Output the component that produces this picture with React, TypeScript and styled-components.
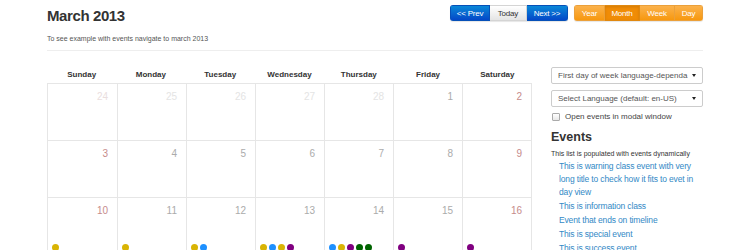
import React from 'react';
import styled, {createGlobalStyle, css} from 'styled-components';

const GlobalStyle = createGlobalStyle`
    body {
        margin: 0;
        background: #fff;
        font-family: "Liberation Sans", Arial, sans-serif;
        color: #333;
    }
`

const Page = styled.div`
    width: 656px;
    padding: 0 47px;
`

const Header = styled.div`
    display: flex;
    justify-content: space-between;
    align-items: flex-start;
`

const Title = styled.h3`
    margin: 0;
    padding-top: 7px;
    font-size: 15px;
    line-height: 18px;
    font-weight: 700;
    letter-spacing: -0.4px;
    color: #333;
`

const Subtitle = styled.div`
    margin-top: 9px;
    font-size: 7px;
    line-height: 10px;
    color: #555;
`

const Toolbar = styled.div`
    display: flex;
    gap: 6px;
    margin-top: 5px;
`

const BtnGroup = styled.div`
    display: flex;
    border-radius: 3px;
    overflow: hidden;
    box-shadow: 0 1px 1px rgba(0, 0, 0, 0.1);
`

type Tone = 'primary' | 'default' | 'warning' | 'warningActive';

const tones = {
    primary: css`
        color: #fff;
        background: linear-gradient(#0a88d8, #0448c8);
        border: 1px solid #0650b8;
    `,
    default: css`
        color: #333;
        background: linear-gradient(#fff, #e4e4e4);
        border: 1px solid #d4d4d4;
    `,
    warning: css`
        color: #fff;
        background: linear-gradient(#fbb24c, #f7980f);
        border: 1px solid #eba03a;
    `,
    warningActive: css`
        color: #fff;
        background: #f08c06;
        border: 1px solid #e0880f;
        box-shadow: inset 0 1px 3px rgba(0, 0, 0, 0.12);
    `,
}

const Btn = styled.div<{ $tone: Tone; $w: number }>`
    width: ${p => p.$w}px;
    height: 16px;
    box-sizing: border-box;
    display: flex;
    align-items: center;
    justify-content: center;
    font-size: 8px;
    letter-spacing: -0.2px;
    & + & {
        border-left-width: 0;
    }
    ${p => tones[p.$tone]}
`

const Divider = styled.div`
    margin-top: 6px;
    border-top: 1px solid #eee;
`

const Body = styled.div`
    display: flex;
    gap: 19px;
    margin-top: 14px;
`

const Calendar = styled.div`
    width: 485px;
`

const WeekHeader = styled.div`
    display: grid;
    grid-template-columns: repeat(7, 1fr);
    height: 18px;
`

const DayName = styled.div`
    padding-top: 2px;
    line-height: 16px;
    text-align: center;
    font-size: 8px;
    font-weight: 700;
    color: #333;
`

const Grid = styled.div`
    display: grid;
    grid-template-columns: repeat(7, 1fr);
    border-left: 1px solid #e6e6e6;
    border-right: 1px solid #e6e6e6;
`

const Cell = styled.div`
    height: 57px;
    box-sizing: border-box;
    border-top: 1px solid #e6e6e6;
    & + & {
        border-left: 1px solid #e6e6e6;
    }
    &:nth-child(7n + 1) {
        border-left: none;
    }
    display: flex;
    flex-direction: column;
`

type DayKind = 'normal' | 'weekend' | 'out' | 'outWeekend';

const dayColors: Record<DayKind, string> = {
    normal: '#ababab',
    weekend: '#c68b8b',
    out: '#e4e4e4',
    outWeekend: '#eadede',
}

const DayNum = styled.div<{ $kind: DayKind }>`
    padding: 7px 9px 0 0;
    text-align: right;
    font-size: 10px;
    line-height: 12px;
    color: ${p => dayColors[p.$kind]};
`

const Events = styled.div`
    display: flex;
    gap: 2px;
    margin-top: 27px;
    padding-left: 4px;
`

const eventColors = {
    warning: '#d9b404',
    info: '#1e90ff',
    special: '#800080',
    success: '#006400',
}

type EventKind = keyof typeof eventColors;

const Dot = styled.span<{ $kind: EventKind }>`
    width: 7px;
    height: 7px;
    border-radius: 50%;
    background: ${p => eventColors[p.$kind]};
`

const Sidebar = styled.div`
    width: 152px;
    padding-top: 2px;
`

const FakeSelect = styled.div`
    height: 17px;
    box-sizing: border-box;
    display: flex;
    align-items: center;
    justify-content: space-between;
    padding: 0 6px 0 6px;
    border: 1px solid #ccc;
    border-radius: 2px;
    font-size: 8px;
    color: #555;
    background: #fff;
    & + & {
        margin-top: 6px;
    }
`

const Caret = styled.span`
    width: 0;
    height: 0;
    border-left: 2px solid transparent;
    border-right: 2px solid transparent;
    border-top: 3px solid #222;
`

const CheckRow = styled.label`
    display: flex;
    align-items: center;
    gap: 5px;
    margin-top: 5px;
    padding-left: 1px;
    font-size: 8px;
    line-height: 10px;
    color: #444;
`

const CheckBox = styled.span`
    width: 6px;
    height: 6px;
    border: 1px solid #aaa;
    border-radius: 1px;
    background: linear-gradient(#fff, #e8e8e8);
`

const EventsTitle = styled.h4`
    margin: 7px 0 0 0;
    font-size: 12.5px;
    line-height: 16px;
    font-weight: 700;
    color: #333;
`

const Note = styled.div`
    margin-top: 4px;
    font-size: 7px;
    line-height: 10px;
    color: #333;
`

const EventList = styled.ul`
    margin: 1px 0 0 0;
    padding: 0 6px 0 8px;
    list-style: none;
`

const EventItem = styled.li`
    font-size: 8.5px;
    letter-spacing: -0.15px;
    line-height: 13px;
    padding-bottom: 1px;
    color: #3289c6;
`

const weekdays = ['Sunday', 'Monday', 'Tuesday', 'Wednesday', 'Thursday', 'Friday', 'Saturday'];

const days: { n: number; kind: DayKind; events?: EventKind[] }[] = [
    {n: 24, kind: 'outWeekend'},
    {n: 25, kind: 'out'},
    {n: 26, kind: 'out'},
    {n: 27, kind: 'out'},
    {n: 28, kind: 'out'},
    {n: 1, kind: 'normal'},
    {n: 2, kind: 'weekend'},
    {n: 3, kind: 'weekend'},
    {n: 4, kind: 'normal'},
    {n: 5, kind: 'normal'},
    {n: 6, kind: 'normal'},
    {n: 7, kind: 'normal'},
    {n: 8, kind: 'normal'},
    {n: 9, kind: 'weekend'},
    {n: 10, kind: 'weekend', events: ['warning']},
    {n: 11, kind: 'normal', events: ['warning']},
    {n: 12, kind: 'normal', events: ['warning', 'info']},
    {n: 13, kind: 'normal', events: ['warning', 'info', 'warning', 'special']},
    {n: 14, kind: 'normal', events: ['info', 'warning', 'special', 'success', 'success']},
    {n: 15, kind: 'normal', events: ['special']},
    {n: 16, kind: 'weekend', events: ['special']},
];

const eventTitles = [
    'This is warning class event with very long title to check how it fits to evet in day view',
    'This is information class',
    'Event that ends on timeline',
    'This is special event',
    'This is success event',
];

function App() {
    return (
        <Page>
            <GlobalStyle/>
            <Header>
                <div>
                    <Title>March 2013</Title>
                    <Subtitle>To see example with events navigate to march 2013</Subtitle>
                </div>
                <Toolbar>
                    <BtnGroup>
                        <Btn $tone="primary" $w={40}>&lt;&lt; Prev</Btn>
                        <Btn $tone="default" $w={37}>Today</Btn>
                        <Btn $tone="primary" $w={41}>Next &gt;&gt;</Btn>
                    </BtnGroup>
                    <BtnGroup>
                        <Btn $tone="warning" $w={31}>Year</Btn>
                        <Btn $tone="warningActive" $w={35}>Month</Btn>
                        <Btn $tone="warning" $w={35}>Week</Btn>
                        <Btn $tone="warning" $w={28}>Day</Btn>
                    </BtnGroup>
                </Toolbar>
            </Header>
            <Divider/>
            <Body>
                <Calendar>
                    <WeekHeader>
                        {weekdays.map(d => <DayName key={d}>{d}</DayName>)}
                    </WeekHeader>
                    <Grid>
                        {days.map(d => (
                            <Cell key={d.n}>
                                <DayNum $kind={d.kind}>{d.n}</DayNum>
                                {d.events && (
                                    <Events>
                                        {d.events.map((e, i) => <Dot key={i} $kind={e}/>)}
                                    </Events>
                                )}
                            </Cell>
                        ))}
                    </Grid>
                </Calendar>
                <Sidebar>
                    <FakeSelect>First day of week language-dependa<Caret/></FakeSelect>
                    <FakeSelect>Select Language (default: en-US)<Caret/></FakeSelect>
                    <CheckRow><CheckBox/>Open events in modal window</CheckRow>
                    <EventsTitle>Events</EventsTitle>
                    <Note>This list is populated with events dynamically</Note>
                    <EventList>
                        {eventTitles.map(t => <EventItem key={t}>{t}</EventItem>)}
                    </EventList>
                </Sidebar>
            </Body>
        </Page>
    );
}

export default App;
